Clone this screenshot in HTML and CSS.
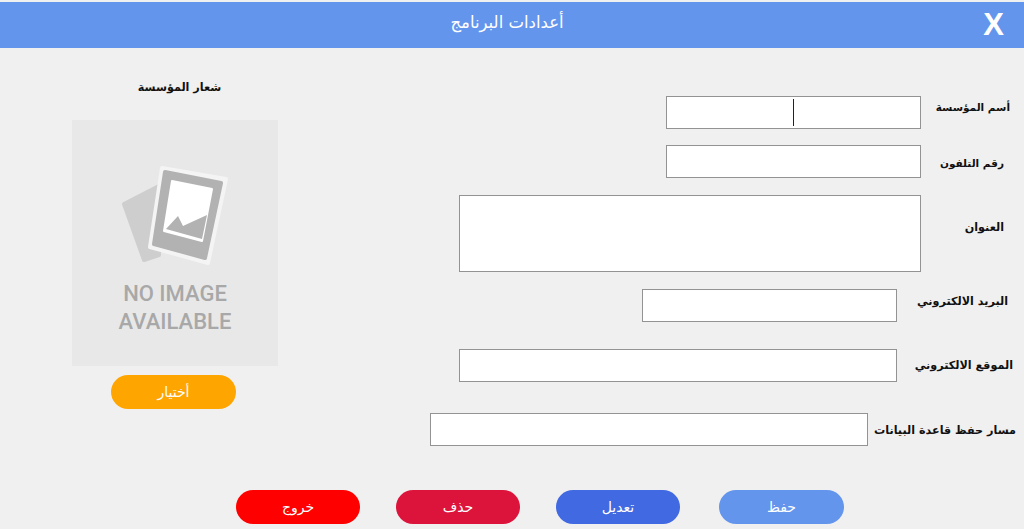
FILE: index.html
```html
<!DOCTYPE html>
<html lang="ar" dir="rtl">
<head>
    <meta charset="UTF-8">
    <meta name="viewport" content="width=device-width, initial-scale=1.0">
    <title>أعدادات البرنامج</title>
    <link rel="stylesheet" href="styles.css">
</head>
<body>
    <header class="title-bar">
        <span class="close-btn">X</span>
        <h1>أعدادات البرنامج</h1>
    </header>

    <main class="content">
        <form class="settings-form">
            <div class="row row-name">
                <label>أسم المؤسسة</label>
                <div class="caret-wrap">
                    <input type="text" class="field-short">
                    <span class="caret"></span>
                </div>
            </div>
            <div class="row row-phone">
                <label>رقم التلفون</label>
                <input type="text" class="field-short">
            </div>
            <div class="row row-address">
                <label>العنوان</label>
                <textarea class="field-wide"></textarea>
            </div>
            <div class="row row-email">
                <label>البريد الالكتروني</label>
                <input type="text" class="field-short">
            </div>
            <div class="row row-site">
                <label>الموقع الالكتروني</label>
                <input type="text" class="field-long">
            </div>
            <div class="row row-path">
                <label>مسار حفظ قاعدة البيانات</label>
                <input type="text" class="field-long">
            </div>
        </form>

        <aside class="logo-panel">
            <h2>شعار المؤسسة</h2>
            <div class="no-image">
                <svg width="108" height="100" viewBox="0 0 108 100">
                    <polygon points="3,39 38,21 38,90 23,95" fill="#cecece" stroke="#cecece" stroke-width="4" stroke-linejoin="round"/>
                    <polygon points="41,3 105,14 87,98 29,82" fill="#f4f4f4" stroke="#f4f4f4" stroke-width="4" stroke-linejoin="round"/>
                    <polygon points="44,7 100,18 84,93 33,79" fill="#b2b2b2" stroke="#b2b2b2" stroke-width="4" stroke-linejoin="round"/>
                    <polygon points="51,16 91,24 81,76 43,66" fill="#ffffff" stroke="#ffffff" stroke-width="2" stroke-linejoin="round"/>
                    <polygon points="45,64 57,51 62,61 86,50 81,74" fill="#b2b2b2"/>
                </svg>
                <p>NO IMAGE<br>AVAILABLE</p>
            </div>
            <button type="button" class="btn btn-choose">أختيار</button>
        </aside>
    </main>

    <footer class="actions">
        <button type="button" class="btn btn-save">حفظ</button>
        <button type="button" class="btn btn-edit">تعديل</button>
        <button type="button" class="btn btn-delete">حذف</button>
        <button type="button" class="btn btn-exit">خروج</button>
    </footer>
</body>
</html>
```

FILE: styles.css
```css
:root {
    --blue: #6495ed;
    --royal: #4169e1;
    --crimson: #dc143c;
    --red: #ff0000;
    --orange: #ffa500;
    --bg: #f0f0f0;
}

* {
    box-sizing: border-box;
}

html, body {
    height: 100%;
}

body {
    margin: 0;
    padding-top: 2px;
    overflow: hidden;
    background-color: var(--bg);
    font-family: "DejaVu Sans", sans-serif;
    color: #111;
}

.title-bar {
    display: grid;
    grid-template-columns: 1fr auto 1fr;
    align-items: center;
    height: 46px;
    background-color: var(--blue);
    color: white;
}

.title-bar h1 {
    margin: 0 10px 6px 0;
    font-size: 16.5px;
    font-weight: normal;
}

.close-btn {
    padding-right: 20px;
    font-family: "Liberation Sans", sans-serif;
    font-size: 31px;
    font-weight: bold;
}

.content {
    display: flex;
    justify-content: space-between;
}

/* form */
.settings-form {
    padding-top: 48px;
}

.row {
    display: flex;
    align-items: center;
}

.row label {
    font-size: 11.2px;
    font-weight: bold;
    white-space: nowrap;
}

.row-name { padding-right: 14px; }
.row-name label { width: 89px; padding-bottom: 12px; font-size: 10.5px; }

.row-phone { margin-top: 16px; padding-right: 20px; }
.row-phone label { width: 83px; padding-top: 2px; font-size: 10.5px; }

.row-address { margin-top: 17px; padding-right: 20px; }
.row-address label { width: 83px; padding-bottom: 12px; }

.row-email { margin-top: 17px; padding-right: 16px; }
.row-email label { width: 111px; padding-bottom: 8px; }

.row-site { margin-top: 27px; padding-right: 11px; }
.row-site label { width: 116px; }

.row-path { margin-top: 31px; padding-right: 8px; }
.row-path label { width: 148px; padding-top: 2px; }

input, textarea {
    display: block;
    padding: 0;
    background-color: white;
    border: 1px solid #939393;
    border-radius: 0;
    resize: none;
}

.field-short { width: 255px; height: 33px; }
.field-wide { width: 462px; height: 77px; }
.field-long { width: 438px; height: 33px; }

.caret-wrap {
    position: relative;
}

.caret {
    position: absolute;
    top: 3px;
    left: 127px;
    width: 1px;
    height: 27px;
    background-color: #222;
}

/* logo column */
.logo-panel {
    display: flex;
    flex-direction: column;
    align-items: center;
    width: 206px;
    margin-left: 72px;
    padding-top: 30px;
}

.logo-panel h2 {
    margin: 0 0 22px;
    padding-left: 9px;
    font-size: 11.2px;
    line-height: 20px;
}

.no-image {
    display: flex;
    flex-direction: column;
    align-items: center;
    width: 206px;
    height: 246px;
    padding-top: 45px;
    background-color: #e8e8e8;
}

.no-image p {
    margin: 15px 0 0;
    font-family: "Roboto", sans-serif;
    font-size: 22px;
    line-height: 28px;
    font-weight: 500;
    text-align: center;
    color: #a8a8a8;
}

/* buttons */
.btn {
    width: 125px;
    height: 34px;
    padding: 0;
    border: none;
    border-radius: 17px;
    font-family: "DejaVu Sans", sans-serif;
    font-size: 14px;
    color: white;
}

.btn-choose {
    margin-top: 9px;
    margin-right: 3px;
    background-color: var(--orange);
}

.actions {
    display: flex;
    justify-content: flex-end;
    gap: 36px;
    margin-top: 44px;
    padding-left: 236px;
}

.actions .btn { width: 124px; }

.actions .btn-save { width: 125px; margin-left: 3px; background-color: var(--blue); }
.btn-edit { background-color: var(--royal); }
.btn-delete { background-color: var(--crimson); }
.btn-exit { background-color: var(--red); }
```
